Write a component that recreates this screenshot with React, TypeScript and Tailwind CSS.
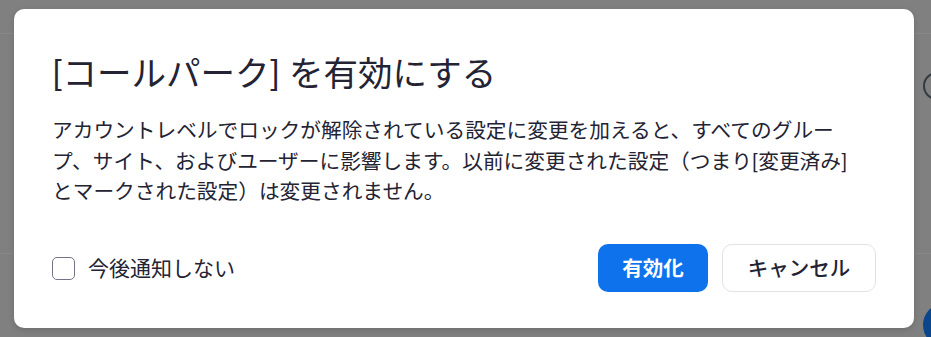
export default function App() {
  return (
    <div className="relative h-[337px] w-[931px] overflow-hidden bg-[#808080] font-['Lato','Noto_Sans_CJK_JP',sans-serif]">
      {/* dimmed page behind the modal */}
      <div className="absolute left-0 right-0 top-[33px] h-px bg-[#888888]" />
      <div className="absolute left-0 right-0 top-[253px] h-px bg-[#888888]" />
      <div className="absolute left-[923px] top-[72px] h-[28px] w-[28px] rounded-full border-2 border-[#333a40]" />
      <div className="absolute left-[923px] top-[303px] h-[44px] w-[44px] rounded-full bg-[#0a468c]" />

      <div className="relative pl-[14px] pt-[9px]">
        <div className="flex h-[319px] w-[900px] flex-col rounded-[10px] bg-white px-[38px] pb-[36px] pt-[43px] shadow-[0_2px_6px_rgba(0,0,0,0.15)]">
          <h2 className="text-[34.5px] leading-[42px] text-[#232333]">
            [コールパーク] を有効にする
          </h2>
          <p className="mt-[21px] whitespace-nowrap text-[20.7px] leading-[30.5px] text-[#232333]">
            アカウントレベルでロックが解除されている設定に変更を加えると、すべてのグルー
            <br />
            プ、サイト、およびユーザーに影響します。以前に変更された設定（つまり[変更済み]
            <br />
            とマークされた設定）は変更されません。
          </p>
          <div className="mt-auto flex items-center justify-between">
            <label className="flex items-center gap-[13px] text-[21px] text-[#232333]">
              <span className="h-[23px] w-[23px] rounded-[5px] border border-[#747487] bg-white" />
              今後通知しない
            </label>
            <div className="flex gap-[14px]">
              <button
                type="button"
                className="h-[48px] w-[110px] rounded-[10px] bg-[#0e72ed] text-[20.5px] font-bold text-white"
              >
                有効化
              </button>
              <button
                type="button"
                className="h-[48px] w-[154px] rounded-[10px] border border-[#dfe3e8] bg-white text-[20.5px] font-medium text-[#232333]"
              >
                キャンセル
              </button>
            </div>
          </div>
        </div>
      </div>
    </div>
  );
}
